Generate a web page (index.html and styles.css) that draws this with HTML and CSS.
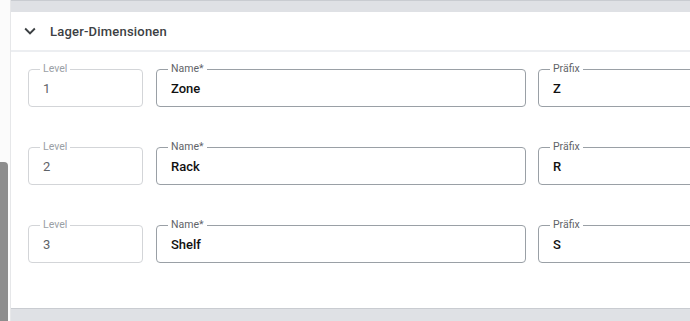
FILE: index.html
```html
<html>
  <head>
    <link rel="stylesheet" href="styles.css">
    <title>Lager-Dimensionen</title>
  </head>
  <body>
    <div class="page">
      <div class="rail">
        <div class="thumb"></div>
      </div>
      <div class="main">
        <div class="band band-top"></div>
        <section class="panel">
          <div class="panel-head">
            <svg class="chevron" width="22" height="22" viewBox="0 0 24 24">
              <path d="M16.59 8.59L12 13.17 7.41 8.59 6 10l6 6 6-6z" fill="currentColor"/>
            </svg>
            <span class="panel-title">Lager-Dimensionen</span>
          </div>
          <div class="panel-body">
            <div class="dim-row">
              <fieldset class="field field-off">
                <legend>Level</legend>
                <input value="1" disabled>
              </fieldset>
              <fieldset class="field">
                <legend>Name*</legend>
                <input value="Zone">
              </fieldset>
              <fieldset class="field">
                <legend>Präfix</legend>
                <input value="Z">
              </fieldset>
            </div>
            <div class="dim-row">
              <fieldset class="field field-off">
                <legend>Level</legend>
                <input value="2" disabled>
              </fieldset>
              <fieldset class="field">
                <legend>Name*</legend>
                <input value="Rack">
              </fieldset>
              <fieldset class="field">
                <legend>Präfix</legend>
                <input value="R">
              </fieldset>
            </div>
            <div class="dim-row">
              <fieldset class="field field-off">
                <legend>Level</legend>
                <input value="3" disabled>
              </fieldset>
              <fieldset class="field">
                <legend>Name*</legend>
                <input value="Shelf">
              </fieldset>
              <fieldset class="field">
                <legend>Präfix</legend>
                <input value="S">
              </fieldset>
            </div>
          </div>
        </section>
        <div class="band band-bottom"></div>
      </div>
    </div>
  </body>
</html>
```

FILE: styles.css
```css
body {
  margin: 0;
  font-family: Roboto, "Liberation Sans", sans-serif;
  background: #fbfbfb;
  overflow: hidden;
}

.page {
  display: flex;
  height: 321px;
}

.rail {
  width: 10px;
  flex: none;
  border-right: 1px solid #e6e7e9;
  display: flex;
  flex-direction: column;
}
.thumb {
  margin-top: 162px;
  width: 8px;
  flex: 1;
  background: #8d8d8d;
  border-radius: 0 4px 0 0;
}

.main {
  flex: 1;
  min-width: 0;
  overflow: hidden;
  display: flex;
  flex-direction: column;
  background: #fff;
}

.band {
  background: #dfe1e5;
  border-top: 1px solid #c9ccd1;
}
.band-top {
  height: 11px;
}
.band-bottom {
  flex: 1;
}

.panel-head {
  height: 38px;
  display: flex;
  align-items: center;
  padding-left: 8px;
  gap: 9px;
  border-bottom: 2px solid #eceef1;
  color: #3c4043;
}
.chevron {
  flex: none;
}
.panel-title {
  font-size: 13px;
  font-weight: 500;
  letter-spacing: 0.2px;
}

.panel-body {
  padding: 11px 0 45px 17px;
  display: flex;
  flex-direction: column;
  gap: 34px;
}

.dim-row {
  display: flex;
  gap: 12px;
}

.field {
  margin: 0;
  padding: 0 14px 4px;
  min-width: 0;
  border: 1px solid #9aa0a6;
  border-radius: 4px;
  flex: none;
  width: 340px;
}
.field:first-child {
  width: 85px;
  margin-right: 1px;
}
.field legend {
  font-size: 10.5px;
  line-height: 12px;
  padding: 0 3px;
  margin-left: -3px;
  color: #5f6368;
}
.field input {
  display: block;
  width: 100%;
  height: 27px;
  border: none;
  padding: 0;
  background: transparent;
  font-family: inherit;
  font-size: 13px;
  font-weight: 500;
  color: #111;
  outline: none;
}

.field-off {
  border-color: #d3d5d8;
}
.field-off legend {
  color: #9aa0a6;
}
.field-off input {
  font-weight: 400;
  color: #5f6368;
}
```
